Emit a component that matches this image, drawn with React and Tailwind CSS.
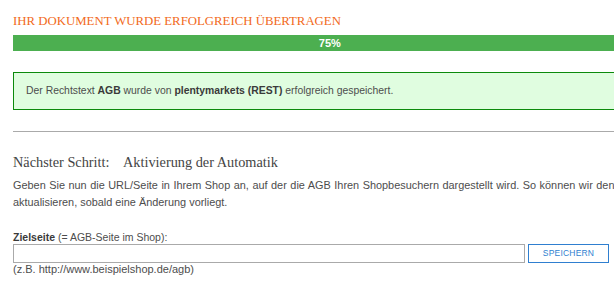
export default function App() {
  const body = { fontFamily: '"Liberation Sans", Arial, sans-serif' };
  const slab = { fontFamily: '"Liberation Serif", "DejaVu Serif", serif' };

  return (
    <div className="w-[614px] h-[287px] overflow-hidden bg-white">
      <div className="w-[845px] ml-[13px] pt-[13px]" style={body}>
        {/* Title */}
        <h1 className="text-[12.8px] leading-[16px] text-[#f26a21] uppercase" style={slab}>
          Ihr Dokument wurde erfolgreich übertragen
        </h1>

        {/* Progress */}
        <div className="mt-[6px] h-[16px] bg-[#f2f2f2]">
          <div className="w-3/4 h-full bg-[#4caf50] flex items-center justify-center text-[11px] font-bold text-white">
            75%
          </div>
        </div>

        {/* Success message */}
        <div className="mt-[21px] h-[38px] border border-[#0c8a0c] bg-[#e0fde0] pl-[12px] flex items-center text-[10.4px] text-[#4d4d4d]">
          <span>
            Der Rechtstext <b className="text-[#3a3a3a]">AGB</b> wurde von{' '}
            <b className="text-[#3a3a3a]">plentymarkets (REST)</b> erfolgreich gespeichert.
          </span>
        </div>

        <hr className="mt-[21px] border-0 border-t border-[#aaa]" />

        {/* Next step */}
        <h2 className="mt-[21px] flex text-[14.3px] leading-[18px] text-[#444]" style={slab}>
          <span className="w-[110px]">Nächster Schritt:</span>
          <span>Aktivierung der Automatik</span>
        </h2>

        <p className="mt-[6px] text-[10.9px] leading-[17px] text-[#4d4d4d]">
          <span className="block whitespace-nowrap [word-spacing:0.5px]">
            Geben Sie nun die URL/Seite in Ihrem Shop an, auf der die AGB Ihren Shopbesuchern dargestellt wird. So können wir den Rechtstext automatisch
          </span>
          <span className="block">aktualisieren, sobald eine Änderung vorliegt.</span>
        </p>

        {/* Target page */}
        <label className="block mt-[19px] text-[10.5px] leading-[14px] text-[#4d4d4d]">
          <b className="text-[#3a3a3a]">Zielseite</b> (= AGB-Seite im Shop):
        </label>
        <div className="flex items-start">
          <input type="text" className="w-[512px] h-[19px] border border-[#aaa] bg-white outline-none" />
          <button className="ml-[3px] w-[81px] h-[19px] border border-[#2f7fd0] bg-white text-[8.5px] text-[#2f7fd0] tracking-[0.2px]">
            SPEICHERN
          </button>
        </div>
        <div className="text-[11px] leading-[12px] text-[#4d4d4d]">(z.B. http://www.beispielshop.de/agb)</div>
      </div>
    </div>
  );
}
